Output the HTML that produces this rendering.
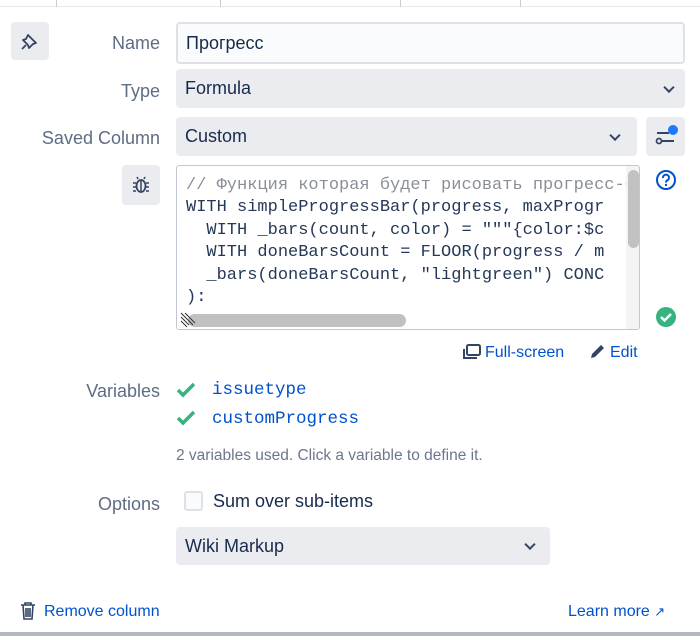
<!DOCTYPE html>
<html><head><meta charset="utf-8"><style>
*{box-sizing:border-box;margin:0;padding:0}
body{width:700px;height:636px;background:#fff;font-family:"Liberation Sans","Noto Sans CJK SC",sans-serif;position:relative;overflow:hidden;color:#172b4d}
.a{position:absolute}
.lbl{position:absolute;right:540px;font-size:18px;color:#5e6c84;white-space:nowrap;line-height:20px}
.sel{position:absolute;background:#ebecf0;border-radius:4px;font-size:18px;padding-left:9px;display:flex;align-items:center;color:#172b4d}
.chev{position:absolute;right:12px;top:50%;width:8px;height:8px;border-right:2px solid #344563;border-bottom:2px solid #344563;transform:translateY(-70%) rotate(45deg)}
.btn{position:absolute;background:#ebecf0;border-radius:4px}
.code{font-family:"Liberation Mono","DejaVu Sans Mono",monospace;font-size:17px;line-height:22.4px;white-space:pre;color:#253858}
.link{color:#0052cc;font-size:16px;line-height:20px;white-space:nowrap}
</style></head><body>
<div class="a" style="left:0;top:0;width:700px;height:7px;border-bottom:1px solid #e6e8ec"></div>
<div class="a" style="left:56px;top:0;width:1px;height:7px;background:#ccc"></div>
<div class="a" style="left:220px;top:0;width:1px;height:7px;background:#ccc"></div>
<div class="a" style="left:400px;top:0;width:1px;height:7px;background:#ccc"></div>
<div class="a" style="left:520px;top:0;width:1px;height:7px;background:#ccc"></div>

<div class="btn" style="left:11px;top:22px;width:38px;height:38px"><svg width="38" height="38" viewBox="0 0 38 38"><path d="M17 13l8 8-3 1-4 4-1-3-5-5 3-1z M15 23l-4 4" fill="none" stroke="#344563" stroke-width="1.8" stroke-linejoin="round"/></svg></div>
<div class="lbl" style="top:33px">Name</div>
<div class="a" style="left:176px;top:22px;width:509px;height:42px;border:2px solid #dfe1e6;border-radius:4px;background:#fafbfc;font-size:18px;padding:9px 0 0 8px">Прогресс</div>

<div class="lbl" style="top:81px">Type</div>
<div class="sel" style="left:176px;top:69px;width:509px;height:39px">Formula<span class="chev"></span></div>

<div class="lbl" style="top:128px">Saved Column</div>
<div class="sel" style="left:176px;top:117px;width:461px;height:39px">Custom<span class="chev" style="right:18px"></span></div>
<div class="btn" style="left:646px;top:117px;width:39px;height:39px"><svg width="39" height="39" viewBox="0 0 39 39"><path d="M11 16h12M15 24h13" stroke="#344563" stroke-width="2"/><circle cx="13" cy="24" r="2.5" fill="none" stroke="#344563" stroke-width="1.8"/><circle cx="27" cy="13" r="5" fill="#1f7aff"/></svg></div>

<div class="btn" style="left:122px;top:165px;width:38px;height:40px"><svg width="38" height="40" viewBox="0 0 38 40"><ellipse cx="19" cy="21" rx="4.5" ry="6" fill="none" stroke="#344563" stroke-width="1.8"/><path d="M14 18h-3M14 22h-3M14 26h-3M24 18h3M24 22h3M24 26h3M19 15v12M16 14l-1-2M22 14l1-2" stroke="#344563" stroke-width="1.5"/></svg></div>

<div class="a" style="left:176px;top:165px;width:464px;height:165px;border:1px solid #c1c7d0;border-radius:3px;overflow:hidden">
<div class="code a" style="left:9px;top:9px"><span style="color:#8a8f98">// Функция которая будет рисовать прогресс-б</span>
WITH simpleProgressBar(progress, maxProgr
  WITH _bars(count, color) = """{color:$c
  WITH doneBarsCount = FLOOR(progress / m
  _bars(doneBarsCount, "lightgreen") CONC
):</div>
<div class="a" style="left:0;top:145px;width:464px;height:20px;background:#fff"></div>
<div class="a" style="left:449px;top:0;width:15px;height:165px;background:#f4f4f4"></div>
<div class="a" style="left:451px;top:4px;width:11px;height:78px;background:#c1c1c1;border-radius:6px"></div>
<div class="a" style="left:11px;top:148px;width:218px;height:13px;background:#c1c1c1;border-radius:7px"></div>
<svg class="a" style="left:2px;top:145px" width="18" height="18"><path d="M2 6l8 8M2 10l6 6M2 2l12 12M6 2l10 10" stroke="#333" stroke-width="1"/></svg>
</div>
<svg class="a" style="left:654px;top:168px" width="24" height="24"><circle cx="12" cy="12" r="9" fill="none" stroke="#0052cc" stroke-width="2"/><path d="M9 10a3 3 0 1 1 4 2.5c-1 .5-1 1-1 2" fill="none" stroke="#0052cc" stroke-width="2"/><circle cx="12" cy="17" r="1.2" fill="#0052cc"/></svg>
<svg class="a" style="left:655px;top:306px" width="22" height="22"><circle cx="11" cy="11" r="10" fill="#36b37e"/><path d="M6 11l3.5 3.5L16 8" fill="none" stroke="#fff" stroke-width="2.5"/></svg>

<svg class="a" style="left:462px;top:343px" width="20" height="18"><rect x="5" y="2" width="13" height="10" rx="1.5" fill="none" stroke="#344563" stroke-width="2"/><path d="M2 6v9h13" fill="none" stroke="#344563" stroke-width="2"/></svg>
<div class="a link" style="left:485px;top:343px">Full-screen</div>
<svg class="a" style="left:589px;top:342px" width="18" height="18"><path d="M2 16l1-4 9-9 3 3-9 9z" fill="#344563"/></svg>
<div class="a link" style="left:610px;top:343px">Edit</div>

<div class="lbl" style="top:381px">Variables</div>
<svg class="a" style="left:176px;top:382px" width="20" height="16"><path d="M2 8l5 5L18 2" fill="none" stroke="#36b37e" stroke-width="3.5"/></svg>
<div class="a code" style="left:212px;top:379px;color:#0052cc;font-size:17.5px">issuetype</div>
<svg class="a" style="left:176px;top:410px" width="20" height="16"><path d="M2 8l5 5L18 2" fill="none" stroke="#36b37e" stroke-width="3.5"/></svg>
<div class="a code" style="left:212px;top:408px;color:#0052cc;font-size:17.5px">customProgress</div>
<div class="a" style="left:176px;top:447px;font-size:15.5px;color:#6b778c">2 variables used. Click a variable to define it.</div>

<div class="lbl" style="top:494px">Options</div>
<div class="a" style="left:184px;top:491px;width:19px;height:20px;border:2px solid #dfe1e6;border-radius:3px;background:#fafbfc"></div>
<div class="a" style="left:213px;top:491px;font-size:18px">Sum over sub-items</div>
<div class="sel" style="left:176px;top:527px;width:374px;height:38px">Wiki Markup<span class="chev" style="right:16px"></span></div>

<svg class="a" style="left:19px;top:601px" width="18" height="20"><path d="M2 4h14M6 4V2h6v2M4 4l1 14h8l1-14M7 7v9M9 7v9M11 7v9" fill="none" stroke="#344563" stroke-width="1.6"/></svg>
<div class="a link" style="left:44px;top:602px">Remove column</div>
<div class="a link" style="left:568px;top:602px">Learn more <span style="font-family:'DejaVu Sans',sans-serif;font-size:13px">↗</span></div>
<div class="a" style="left:0;top:632px;width:700px;height:4px;background:#b3b8c0"></div>
</body></html>
